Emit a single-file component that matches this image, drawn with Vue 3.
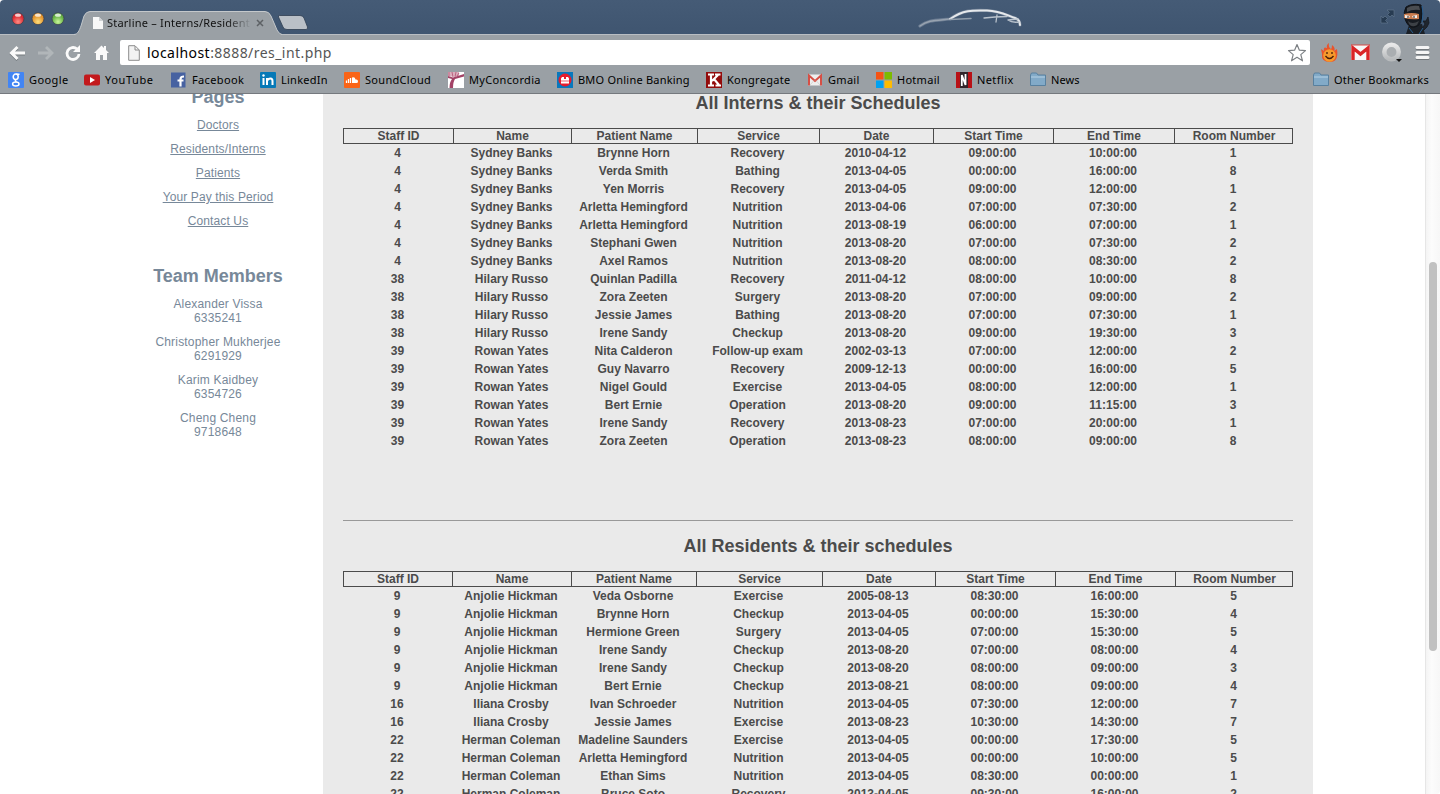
<script setup>
const bookmarks = [
  { icon: 'google', label: 'Google', width: 76, spacing: 0.4 },
  { icon: 'youtube', label: 'YouTube', width: 87, spacing: 0.6 },
  { icon: 'facebook', label: 'Facebook', width: 89, spacing: 0.35 },
  { icon: 'linkedin', label: 'LinkedIn', width: 84, spacing: 0.25 },
  { icon: 'soundcloud', label: 'SoundCloud', width: 104, spacing: 0.3 },
  { icon: 'concordia', label: 'MyConcordia', width: 109, spacing: 0.35 },
  { icon: 'bmo', label: 'BMO Online Banking', width: 149, spacing: 0.22 },
  { icon: 'kong', label: 'Kongregate', width: 101, spacing: 0.27 },
  { icon: 'gmail', label: 'Gmail', width: 69, spacing: 0.3 },
  { icon: 'hotmail', label: 'Hotmail', width: 80, spacing: 0.28 },
  { icon: 'netflix', label: 'Netflix', width: 74, spacing: 0.4 },
  { icon: 'folder', label: 'News', width: 60, spacing: 0.1 },
  { icon: 'folder', label: 'Other Bookmarks', width: 119, spacing: 0.23 },
]
const links = ['Doctors', 'Residents/Interns', 'Patients', 'Your Pay this Period', 'Contact Us']
const team = [
  ['Alexander Vissa', '6335241'],
  ['Christopher Mukherjee', '6291929'],
  ['Karim Kaidbey', '6354726'],
  ['Cheng Cheng', '9718648'],
]
const headers = ['Staff ID', 'Name', 'Patient Name', 'Service', 'Date', 'Start Time', 'End Time', 'Room Number']
const split = (text) => text.trim().split('\n').map((line) => line.trim().split('|'))
const tables = [
  {
    title: 'All Interns & their Schedules',
    kind: 'interns',
    rows: split(`
      4|Sydney Banks|Brynne Horn|Recovery|2010-04-12|09:00:00|10:00:00|1
      4|Sydney Banks|Verda Smith|Bathing|2013-04-05|00:00:00|16:00:00|8
      4|Sydney Banks|Yen Morris|Recovery|2013-04-05|09:00:00|12:00:00|1
      4|Sydney Banks|Arletta Hemingford|Nutrition|2013-04-06|07:00:00|07:30:00|2
      4|Sydney Banks|Arletta Hemingford|Nutrition|2013-08-19|06:00:00|07:00:00|1
      4|Sydney Banks|Stephani Gwen|Nutrition|2013-08-20|07:00:00|07:30:00|2
      4|Sydney Banks|Axel Ramos|Nutrition|2013-08-20|08:00:00|08:30:00|2
      38|Hilary Russo|Quinlan Padilla|Recovery|2011-04-12|08:00:00|10:00:00|8
      38|Hilary Russo|Zora Zeeten|Surgery|2013-08-20|07:00:00|09:00:00|2
      38|Hilary Russo|Jessie James|Bathing|2013-08-20|07:00:00|07:30:00|1
      38|Hilary Russo|Irene Sandy|Checkup|2013-08-20|09:00:00|19:30:00|3
      39|Rowan Yates|Nita Calderon|Follow-up exam|2002-03-13|07:00:00|12:00:00|2
      39|Rowan Yates|Guy Navarro|Recovery|2009-12-13|00:00:00|16:00:00|5
      39|Rowan Yates|Nigel Gould|Exercise|2013-04-05|08:00:00|12:00:00|1
      39|Rowan Yates|Bert Ernie|Operation|2013-08-20|09:00:00|11:15:00|3
      39|Rowan Yates|Irene Sandy|Recovery|2013-08-23|07:00:00|20:00:00|1
      39|Rowan Yates|Zora Zeeten|Operation|2013-08-23|08:00:00|09:00:00|8`),
  },
  {
    title: 'All Residents & their schedules',
    kind: 'residents',
    rows: split(`
      9|Anjolie Hickman|Veda Osborne|Exercise|2005-08-13|08:30:00|16:00:00|5
      9|Anjolie Hickman|Brynne Horn|Checkup|2013-04-05|00:00:00|15:30:00|4
      9|Anjolie Hickman|Hermione Green|Surgery|2013-04-05|07:00:00|15:30:00|5
      9|Anjolie Hickman|Irene Sandy|Checkup|2013-08-20|07:00:00|08:00:00|4
      9|Anjolie Hickman|Irene Sandy|Checkup|2013-08-20|08:00:00|09:00:00|3
      9|Anjolie Hickman|Bert Ernie|Checkup|2013-08-21|08:00:00|09:00:00|4
      16|Iliana Crosby|Ivan Schroeder|Nutrition|2013-04-05|07:30:00|12:00:00|7
      16|Iliana Crosby|Jessie James|Exercise|2013-08-23|10:30:00|14:30:00|7
      22|Herman Coleman|Madeline Saunders|Exercise|2013-04-05|00:00:00|17:30:00|5
      22|Herman Coleman|Arletta Hemingford|Nutrition|2013-04-05|00:00:00|10:00:00|5
      22|Herman Coleman|Ethan Sims|Nutrition|2013-04-05|08:30:00|00:00:00|1
      22|Herman Coleman|Bruce Soto|Recovery|2013-04-05|09:30:00|16:00:00|2`),
  },
]
</script>

<template>
  <div class="window">
    <header class="titlebar">
      <svg class="lights" width="76" height="36" viewBox="0 0 76 36">
        <defs>
          <radialGradient id="red" cy=".75"><stop offset="0" stop-color="#ff8d84" /><stop offset="1" stop-color="#dc2b33" /></radialGradient>
          <radialGradient id="amber" cy=".75"><stop offset="0" stop-color="#ffe07d" /><stop offset="1" stop-color="#e3932d" /></radialGradient>
          <radialGradient id="green" cy=".75"><stop offset="0" stop-color="#c9f79a" /><stop offset="1" stop-color="#65b145" /></radialGradient>
        </defs>
        <g stroke="#3b4350" stroke-width=".8">
          <circle cx="18" cy="18.7" r="6" fill="url(#red)" />
          <circle cx="38" cy="18.7" r="6" fill="url(#amber)" />
          <circle cx="58" cy="18.7" r="6" fill="url(#green)" />
        </g>
        <g fill="#fff" opacity=".75"><ellipse cx="18" cy="15.2" rx="3" ry="1.6" /><ellipse cx="38" cy="15.2" rx="3" ry="1.6" /><ellipse cx="58" cy="15.2" rx="3" ry="1.6" /></g>
      </svg>
      <div class="tab">
        <svg class="tab-shape" width="206" height="25" viewBox="0 0 206 25">
          <path d="M-2 25C2 24 3 21 5 16L8 6Q10 1.500 14 1.500H189Q193 1.500 195 6L201 20Q203 24 206 25Z" fill="#9aa0a5" />
          <path d="M-2 24.5C2 24 3 21 5 16L8 6Q10 1.500 14 1.500H189Q193 1.500 195 6L201 20Q203 24 206 24.5" fill="none" stroke="#c4c8cb" />
        </svg>
        <div class="tab-content">
          <svg width="10" height="12" viewBox="0 0 10 12"><path d="M0 0H6L10 4V12H0Z" fill="#f8f8f8" /><path d="M6 0V4H10Z" fill="#cfd2d4" /></svg>
          <span class="tab-title">Starline – Interns/Resident</span>
          <svg class="close" width="8" height="8" viewBox="0 0 8 8"><path d="M1 1L7 7M7 1L1 7" stroke="#5d6165" stroke-width="1.5" /></svg>
        </div>
      </div>
      <svg class="newtab" width="34" height="18" viewBox="0 0 34 18"><path d="M3.5 1.5H24Q27 1.500 28 4L31.500 13Q32 15.500 30 15.500H11Q8 15.500 7 13L2.500 3Q2 1.500 3.500 1.500Z" fill="#bac0c7" stroke="#303f52" stroke-width=".8" /></svg>
      <svg class="car" width="110" height="26" viewBox="0 0 110 26" fill="none" stroke-linecap="round">
        <path d="M3 19C11 13 18 13.500 33 12C46 3 55 3 70 3.500C84 4 91 9 98 11Q103 13 103 18" stroke="#8795a6" stroke-width="3.200" opacity=".6" />
        <path d="M3 19C11 13 18 13.500 33 12" stroke="#98a3b0" stroke-width="1.500" />
        <path d="M33 12C46 3 55 3 70 3.500C84 4 91 9 98 11Q103 13 103 18" stroke="#e6e9ec" stroke-width="2" />
        <path d="M33 12.500L54 11.500" stroke="#909dab" stroke-width="1.500" />
        <path d="M67 11L78 10L90 9.500M80 8L79 15M91 13Q95 16 102 15M91 13L101 12" stroke="#b9c2cc" stroke-width="1.300" />
      </svg>
      <svg class="expand" width="16" height="16" viewBox="0 0 16 16"><path d="M7 1H14V8L12 6L10 8L7.500 5.500L9.500 3.500Z M1 7L3 9L5 7L7.500 9.500L5.500 11.500L8 14H1Z" fill="#273b51" stroke="#647a91" stroke-width=".6" /></svg>
      <svg class="ninja" width="30" height="31" viewBox="0 0 30 31">
        <path d="M19 27L23 21L21 18L24 18L26 14L27 20L25 24L21 28Z" fill="#20262e" stroke="#15191f" stroke-width=".8" />
        <path d="M7 22L4 31H23L20 21Z" fill="#1b2027" />
        <path d="M4 4Q10 0 19 2Q21 11 19 19Q16 25 9 24Q4 21 3 16Q1 9 4 4Z" fill="#171b21" stroke="#101318" />
        <path d="M5 5Q9 2 17 3L18 7Q10 6 5 9Z" fill="#4a4d51" />
        <path d="M6 18Q10 22 17 18L15 22Q10 25 7 21Z" fill="#3d4146" />
        <path d="M2 11Q10 9 17 11V16Q9 17 2 15Z" fill="#c97d50" />
        <path d="M3 12L8 13L7 15H3ZM10 13L15 12V15H11Z" fill="#f7eee8" /><path d="M6 13V15M12 13V15" stroke="#222" />
        <path d="M20 3Q22 11 20 19M7 25L11 30M21 25L17 31" fill="none" stroke="#285e90" />
      </svg>
    </header>

    <div class="toolbar">
      <svg class="nav" width="120" height="35" viewBox="0 0 120 35" fill="none">
        <path d="M25 18H12M17.500 12L11.500 18L17.500 24" stroke="#747a7e" stroke-width="3" transform="translate(0 1)" />
        <path d="M25 18H12M17.500 12L11.500 18L17.500 24" stroke="#fafafa" stroke-width="3" />
        <path d="M38 18H51M46 12L52 18L46 24" stroke="#b1b6b9" stroke-width="2.800" />
        <path d="M77 14A6 6 0 1 0 79 19" stroke="#fafafa" stroke-width="2.800" /><path d="M80 10V17H73Z" fill="#fafafa" />
        <path d="M94 18L101.500 10.500L104 13V11H106V15L109 18H107V25H103V20H100V25H96V18Z" fill="#fafafa" />
      </svg>
      <div class="omnibox">
        <svg class="doc" width="12" height="16" viewBox="0 0 12 16"><path d="M.7.700H7L11.300 5V15.300H.7Z" fill="#f3f3f3" stroke="#8c8c8c" /><path d="M7 1V5H11" fill="none" stroke="#8c8c8c" /></svg>
        <span class="url"><b>localhost</b>:8888/res_int.php</span>
        <svg class="star" width="20" height="20" viewBox="0 0 20 20"><path d="M10 1.500L12.400 7.200L18.500 7.600L13.800 11.600L15.500 17.800L10 14.300L4.500 17.800L6.200 11.600L1.500 7.600L7.600 7.200Z" fill="#fff" stroke="#7d8185" stroke-width="1.200" stroke-linejoin="round" /></svg>
      </div>
      <svg class="extensions" width="130" height="35" viewBox="0 0 130 35">
        <defs><linearGradient id="ring" x2="0" y2="1"><stop stop-color="#e8e8e8" /><stop offset="1" stop-color="#b8bbbd" /></linearGradient></defs>
        <path d="M19 8Q18 12 21 14Q22 13 22 10Q26 13 24 16L27 14Q29 27 20 27Q11 27 12 19L11 14L14 16Q13 11 17 13Q16 10 19 8Z" fill="#e9542c" />
        <circle cx="19.500" cy="20.500" r="6.300" fill="#f59a2c" /><path d="M17 17V19M22 17V19M15.500 21Q19.500 26 23.500 21" fill="none" stroke="#4a1d08" stroke-width="1.300" />
        <path d="M41 10H60V25H41Z" fill="#f7f7f7" /><path d="M43 25V13L50.500 19L58 13V25" fill="none" stroke="#da2426" stroke-width="3.400" /><path d="M41 10H60" stroke="#d74a46" />
        <circle cx="81.500" cy="17" r="7.200" fill="#aaaeb1" stroke="url(#ring)" stroke-width="4.500" /><path d="M86 24H92L89 27Z" fill="#111" />
        <path d="M107 13H118M107 18H118M107 23H118" stroke="#73787c" stroke-width="3" stroke-linecap="round" transform="translate(0 .6)" />
        <path d="M107 12.500H118M107 17.500H118M107 22.500H118" stroke="#f5f5f5" stroke-width="3" stroke-linecap="round" />
      </svg>
    </div>

    <nav class="bookmarks">
      <div v-for="b in bookmarks" :key="b.label" class="bookmark" :class="{ other: b.label === 'Other Bookmarks' }" :style="{ width: b.width + 'px' }">
        <svg class="favicon" width="16" height="16" viewBox="0 0 16 16">
          <template v-if="b.icon === 'google'"><rect width="16" height="16" rx="1" fill="#4285f4" /><g fill="none" stroke="#fff" stroke-width="1.500"><ellipse cx="7.700" cy="4.800" rx="2.500" ry="2.700" /><path d="M8 2.200H11.500M8 7.500Q6.500 9 8.500 10" /><ellipse cx="7.800" cy="12" rx="3.200" ry="2" /></g></template>
          <template v-else-if="b.icon === 'youtube'"><rect y="2.500" width="16" height="11" rx="2" fill="#c3191c" /><path d="M6 5L11 8L6 11Z" fill="#fff" /></template>
          <template v-else-if="b.icon === 'facebook'"><rect width="14.500" height="15" y=".5" fill="#4762a1" /><path d="M9.500 14.500V7Q9.500 4.500 13 4.500M6.500 8.500H12.500" fill="none" stroke="#fff" stroke-width="2.200" /></template>
          <template v-else-if="b.icon === 'linkedin'"><rect width="16" height="16" rx="1" fill="#0679b7" /><path d="M3.500 6V13M7 6V13M7 9Q8 6.500 10.500 6.500Q12.500 6.500 12.500 9V13" fill="none" stroke="#fff" stroke-width="2" /><circle cx="3.500" cy="3.500" r="1.200" fill="#fff" /></template>
          <template v-else-if="b.icon === 'soundcloud'"><rect width="16" height="16" rx="1" fill="#fa6417" /><path d="M8 11V5.500Q11 4.500 11.500 7.500Q14 7 14 9.500Q14 11 12.500 11Z" fill="#fff" /><path d="M2.500 8.500V11M4.500 7V11M6.500 6V11" stroke="#fff" stroke-width="1.300" /></template>
          <template v-else-if="b.icon === 'concordia'"><rect width="16" height="16" fill="#fff" /><rect width="11" height="4.500" fill="#dcaebd" /><path d="M0 4L5 5.500L16 2V4.500L7 7Q5 10 5 16H1.500Q1.500 10 4 7L0 6Z" fill="#a34266" /><path d="M1 0V4M4 0L5 5M8 0L7 5M11 1L9 4" stroke="#b96481" /></template>
          <template v-else-if="b.icon === 'bmo'"><rect width="16" height="16" fill="#0878bd" /><circle cx="8" cy="8" r="6.500" fill="#e61c2d" /><path d="M4 11.500V6.500L5 5H7V7H9V5H11L12 6.500V11.500Z" fill="#fff" /><path d="M4 9H12" stroke="#e61c2d" stroke-width=".7" /></template>
          <template v-else-if="b.icon === 'kong'"><rect width="16" height="16" fill="#930c0c" /><path d="M2 2.500H8M2 13.500H8M5 2V14M9 2.500H14.500M9.500 13.500H15M6 9L12 3M8 7L13 13" fill="none" stroke="#fff" stroke-width="2.200" /></template>
          <template v-else-if="b.icon === 'gmail'"><path d="M1 2.500H15V13.500H1Z" fill="#eee" /><path d="M2 13.500V3.500L8 9L14 3.500V13.500" fill="none" stroke="#d64f45" stroke-width="2" /><path d="M3 13L7 8.500M13 13L9 8.500" stroke="#c9c9c9" stroke-width=".7" /></template>
          <template v-else-if="b.icon === 'hotmail'"><path d="M0 0H7.500V7.500H0Z" fill="#f65314" /><path d="M8.500 0H16V7.500H8.500Z" fill="#7cbb00" /><path d="M0 8.500H7.500V16H0Z" fill="#00a1f1" /><path d="M8.500 8.500H16V16H8.500Z" fill="#ffbb00" /></template>
          <template v-else-if="b.icon === 'netflix'"><rect width="16" height="16" fill="#b81116" /><rect x="4" width="8" height="16" fill="#31252a" /><path d="M5.800 14V3L9.500 13V2" fill="none" stroke="#fff" stroke-width="1.800" /></template>
          <template v-else><path d="M.5 3V13.500H15.500V3H8L6.500 1H1.500Z" fill="#82aac8" stroke="#58809f" /><path d="M1 5H15" stroke="#b5d0e3" /></template>
        </svg>
        <span class="bookmark-label" :style="{ letterSpacing: b.spacing + 'px' }">{{ b.label }}</span>
      </div>
    </nav>

    <div class="viewport">
      <div class="page">
        <aside class="sidebar">
          <section class="pages">
            <h2>Pages</h2>
            <a v-for="l in links" :key="l">{{ l }}</a>
          </section>
          <section class="team">
            <h2>Team Members</h2>
            <p v-for="m in team" :key="m[1]">{{ m[0] }}<br>{{ m[1] }}</p>
          </section>
        </aside>
        <main class="content">
          <section v-for="t in tables" :key="t.kind" :class="t.kind">
            <h2>{{ t.title }}</h2>
            <div class="row head"><span v-for="h in headers" :key="h">{{ h }}</span></div>
            <div v-for="(r, i) in t.rows" :key="i" class="row"><span v-for="(c, j) in r" :key="j">{{ c }}</span></div>
          </section>
        </main>
      </div>
      <div class="scrollbar"><div class="thumb"></div></div>
    </div>
  </div>
</template>

<style>
body { margin: 0; overflow: hidden; background: #fff; }
</style>
<style scoped>
* { box-sizing: border-box; }
svg { display: block; flex: none; }
.window { width: 1440px; height: 794px; display: flex; flex-direction: column; overflow: hidden; border-radius: 4px; font-family: "Noto Sans", sans-serif; }
.titlebar { position: relative; flex: none; height: 35px; display: flex; background: linear-gradient(#455b76, #3f5570); border-bottom: 1px solid #b8bdc2; }
.tab { position: relative; width: 206px; height: 25px; margin-top: 10px; }
.tab-shape { position: absolute; inset: 0; overflow: visible; }
.tab-content { position: relative; display: flex; align-items: center; padding-left: 17px; height: 25px; }
.tab-title { width: 146px; margin-left: 4px; white-space: nowrap; font-size: 11px; letter-spacing: .22px; color: #111; mask-image: linear-gradient(90deg, #000 82%, transparent 99%); }
.close { margin-left: 3px; }
.newtab { margin: 14px 0 0 -6px; }
.car { position: absolute; left: 917px; top: 7px; }
.expand { position: absolute; left: 1380px; top: 9px; }
.ninja { position: absolute; left: 1402px; top: 3px; }
.toolbar { flex: none; height: 35px; display: flex; background: #9aa0a5; }
.omnibox { width: 1190px; height: 25px; margin-top: 5px; background: #fff; border-radius: 2px; display: flex; align-items: center; }
.doc { margin: 0 0 0 8px; }
.url { margin-left: 7px; flex: 1; font-size: 14px; letter-spacing: .44px; color: #555; white-space: nowrap; }
.url b { font-weight: normal; color: #000; }
.star { margin-right: 3px; }
.bookmarks { flex: none; height: 24px; display: flex; padding-left: 8px; background: #9aa0a5; border-bottom: 1px solid #75797e; }
.bookmark { flex: none; display: flex; height: 20px; align-items: center; }
.bookmark-label { margin-left: 5px; font-size: 11px; line-height: 20px; white-space: nowrap; color: #000; }
.other { margin-left: auto; margin-right: 8px; }
.viewport { flex: 1; min-height: 0; display: flex; background: #fff; font-family: "Liberation Sans", Arial, sans-serif; font-size: 12px; }
.page { display: flex; width: 1425px; padding-left: 113px; overflow: hidden; }
.sidebar { width: 210px; text-align: center; color: #778899; }
h2 { margin: 0; font-size: 18px; line-height: 20px; text-align: center; }
.pages { display: flex; flex-direction: column; align-items: center; margin-top: -7px; height: 179px; }
.pages h2 { margin-bottom: 6px; }
.pages a { line-height: 24px; height: 24px; text-decoration: underline; letter-spacing: .12px; }
.team h2 { margin-bottom: 11px; }
.team p { margin: 0 0 10px; line-height: 14px; letter-spacing: .18px; }
.content { width: 990px; height: 700px; padding: 0 20px; overflow: hidden; background: #eaeaea; color: #4b4b4b; font-weight: bold; }
.interns { height: 426px; padding-top: 0; margin-top: -1px; }
.row { display: grid; grid-template-columns: 110px 118px 126px 122px 114px 120px 121px 119px; height: 18px; line-height: 18px; text-align: center; }
.row span { padding-right: 1px; white-space: nowrap; }
.residents .row { grid-template-columns: 109px 119px 125px 126px 113px 120px 120px 118px; }
.row.head { height: 16px; line-height: 14px; margin-top: 15px; border: 1px solid #4b4b4b; border-left: 0; }
.row.head span { padding: 0; border-left: 1px solid #4b4b4b; }
.residents { border-top: 1px solid #999; padding-top: 15px; margin-top: 1px; }
.scrollbar { width: 15px; border-left: 1px solid #e6e6e6; background: linear-gradient(90deg, #f4f4f4, #fcfcfc 40%, #f7f7f7); }
.thumb { width: 8px; height: 389px; margin: 168px 0 0 3px; border-radius: 4px; background: #c1c1c1; }
</style>
